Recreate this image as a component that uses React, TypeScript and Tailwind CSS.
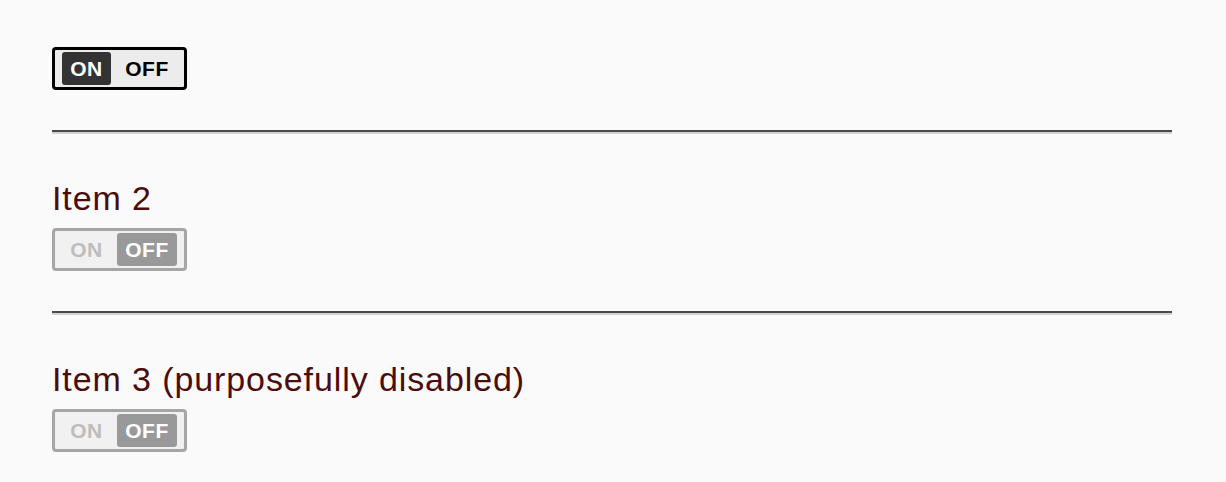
import React from 'react';

type ToggleProps = {
  on: boolean;
  disabled?: boolean;
};

const Toggle: React.FC<ToggleProps> = ({ on, disabled }) => {
  // active toggle (first row) is dark, the others are greyed out
  const active = !disabled;

  return (
    <div
      className={`inline-flex items-center gap-[6px] px-[7px] py-[2px] rounded-[4px] border-[3px] ${
        active ? 'border-black bg-[#ececec]' : 'border-[#a6a6a6] bg-[#f1f1f1]'
      }`}
    >
      <span
        className={`flex h-[33px] w-[49px] items-center justify-center rounded-[3px] text-[21px] font-bold tracking-[0.5px] ${
          on
            ? active
              ? 'bg-[#333333] text-white'
              : 'bg-[#999999] text-white'
            : active
            ? 'text-black'
            : 'text-[#bdbdbd]'
        }`}
      >
        ON
      </span>
      <span
        className={`flex h-[33px] w-[60px] items-center justify-center rounded-[3px] text-[21px] font-bold tracking-[0.5px] ${
          !on
            ? active
              ? 'bg-[#333333] text-white'
              : 'bg-[#999999] text-white'
            : active
            ? 'text-black'
            : 'text-[#bdbdbd]'
        }`}
      >
        OFF
      </span>
    </div>
  );
};

const Rule = () => (
  <div className="mt-[40px] border-t-2 border-b-2 border-t-[#4a4a4a] border-b-[#d2d2d2]" />
);

export default function App() {
  return (
    <div className="min-h-screen bg-[#fafafa] pl-[52px] pr-[54px] pt-[47px] font-['Liberation_Sans',Arial,sans-serif]">
      <div className="flex">
        <Toggle on={true} />
      </div>

      <Rule />

      <div className="mt-[46px] text-[34px] leading-[36px] tracking-[0.9px] text-[#4a0c0c]">Item 2</div>
      <div className="mt-[12px] flex">
        <Toggle on={false} disabled />
      </div>

      <Rule />

      <div className="mt-[46px] text-[34px] leading-[36px] tracking-[0.9px] text-[#4a0c0c]">
        Item 3 (purposefully disabled)
      </div>
      <div className="mt-[12px] flex">
        <Toggle on={false} disabled />
      </div>
    </div>
  );
}
